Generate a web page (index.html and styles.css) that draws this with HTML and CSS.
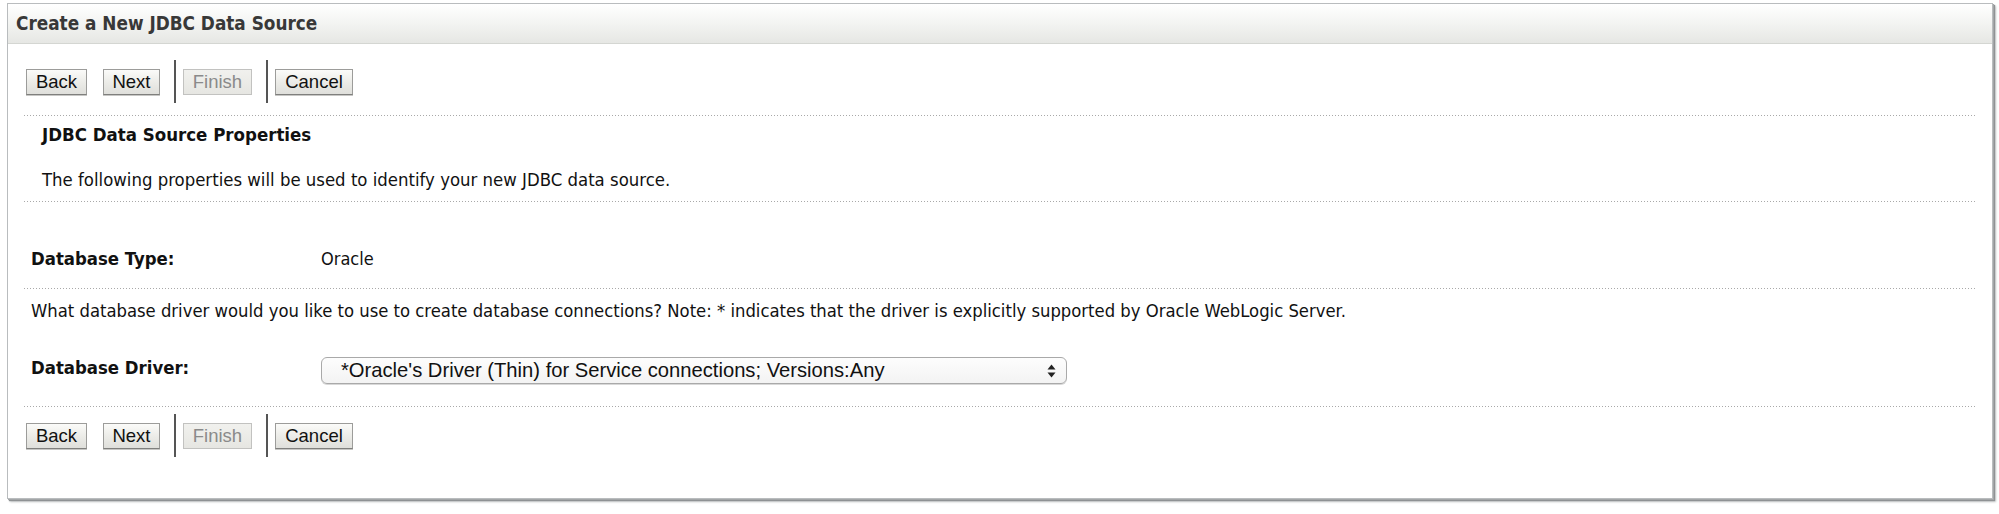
FILE: index.html
```html
<!DOCTYPE html>
<html>
<head>
<meta charset="utf-8">
<title>Create a New JDBC Data Source</title>
<link rel="stylesheet" href="styles.css">
</head>
<body>
<div class="frame">
  <div class="titlebar">Create a New JDBC Data Source</div>
  <div class="content">
    <div class="btnbar">
      <button class="btn btn-back">Back</button>
      <button class="btn btn-next">Next</button>
      <span class="sep"></span>
      <button class="btn btn-finish" disabled>Finish</button>
      <span class="sep"></span>
      <button class="btn btn-cancel">Cancel</button>
    </div>
    <div class="section intro-section">
      <div class="heading">JDBC Data Source Properties</div>
      <div class="intro">The following properties will be used to identify your new JDBC data source.</div>
    </div>
    <div class="section type-section">
      <div class="row">
        <span class="label">Database Type:</span>
        <span class="value">Oracle</span>
      </div>
    </div>
    <div class="section driver-section">
      <div class="note">What database driver would you like to use to create database connections? Note: * indicates that the driver is explicitly supported by Oracle WebLogic Server.</div>
      <div class="row driver-row">
        <span class="label">Database Driver:</span>
        <div class="select">
          <span class="select-text">*Oracle's Driver (Thin) for Service connections; Versions:Any</span>
          <svg class="arrows" width="9" height="14" viewBox="0 0 9 14"><path d="M4.5 0.5 L8.5 5.5 L0.5 5.5 Z" fill="#222"/><path d="M4.5 13.5 L8.5 8.5 L0.5 8.5 Z" fill="#222"/></svg>
        </div>
      </div>
    </div>
    <div class="section bottom-section">
      <div class="btnbar">
        <button class="btn btn-back">Back</button>
        <button class="btn btn-next">Next</button>
        <span class="sep"></span>
        <button class="btn btn-finish" disabled>Finish</button>
        <span class="sep"></span>
        <button class="btn btn-cancel">Cancel</button>
      </div>
    </div>
  </div>
</div>
</body>
</html>
```

FILE: styles.css
```css
html, body {
  margin: 0;
  padding: 0;
  background: #ffffff;
}
body {
  width: 1999px;
  height: 514px;
  overflow: hidden;
  font-family: "DejaVu Sans Condensed", "DejaVu Sans", sans-serif;
  font-stretch: condensed;
  color: #111;
}
.frame {
  margin: 3px 0 0 7px;
  width: 1984px;
  height: 494px;
  box-sizing: content-box;
  border: 1px solid #b9bcbe;
  box-shadow: 1px 1px 0 #a3a6a8, 2px 2px 1px #8f9294, 3px 3px 2px #c4c6c7;
  background: #fff;
}
.titlebar {
  height: 39px;
  line-height: 39px;
  padding-left: 8px;
  background: linear-gradient(#ffffff, #f4f5f3 45%, #e6e7e4);
  border-bottom: 1px solid #d4d6d2;
  font-weight: bold;
  font-size: 18.8px;
  color: #383838;
}
.content {
  padding: 0 16px 0 16px;
}
.btnbar {
  display: flex;
  align-items: center;
  height: 43px;
  padding-top: 16px;
  padding-left: 2px;
}
.btn {
  font-family: "Liberation Sans", Arial, sans-serif;
  font-size: 18.5px;
  height: 26px;
  padding: 0;
  margin: 0;
  border: 1px solid #9c9c9a;
  border-bottom-color: #7f7f7d;
  border-radius: 0;
  background: linear-gradient(#fbfbf9, #ecece8 50%, #dfdfdb);
  color: #111;
  line-height: 24px;
  box-shadow: 0 1px 0 #c7c7c5;
}
.btn-back { width: 61px; }
.btn-next { width: 57px; margin-left: 16px; }
.btn-finish {
  width: 69px;
  color: #8a8a8a;
  border-color: #c2c2c0;
  background: linear-gradient(#f1f1ee, #e6e6e2);
  box-shadow: none;
}
.btn-cancel { width: 78px; }
.sep {
  width: 2px;
  height: 43px;
  background: #555;
  margin: 0 7px 0 14px;
}
.section {
  background-image: repeating-linear-gradient(to right, #a9a9a9 0, #a9a9a9 1px, transparent 1px, transparent 3px);
  background-size: 100% 1px;
  background-repeat: no-repeat;
  background-position: left top;
  border-top: 1px solid transparent;
}
.btnbar + .intro-section {
  margin-top: 11px;
}
.intro-section {
  padding: 10px 0 10px 18px;
}
.heading {
  font-weight: bold;
  font-size: 18.5px;
  line-height: 20px;
  margin-bottom: 25px;
}
.intro {
  font-size: 18.4px;
  line-height: 20px;
}
.type-section {
  padding: 48px 0 18px 7px;
}
.row {
  display: grid;
  grid-template-columns: 290px auto;
  align-items: start;
}
.label {
  font-weight: bold;
  font-size: 18.4px;
  line-height: 20px;
}
.value {
  font-size: 18px;
  line-height: 20px;
}
.driver-section {
  padding: 13px 0 21px 7px;
}
.note {
  font-size: 18.3px;
  line-height: 20px;
  margin-bottom: 36px;
}
.driver-row .label {
  margin-top: 1px;
}
.select {
  width: 746px;
  height: 27px;
  box-sizing: border-box;
  border: 1px solid #a9a9a9;
  border-radius: 6px;
  background: linear-gradient(#fdfdfd, #f3f3f3);
  display: flex;
  align-items: center;
  justify-content: space-between;
  padding: 0 10px 0 19px;
  box-shadow: 0 1px 0 #d8d8d8;
}
.select-text {
  font-family: "Liberation Sans", Arial, sans-serif;
  font-size: 20.2px;
  color: #111;
}
.arrows {
  display: block;
}
.bottom-section .btnbar {
  padding-top: 8px;
}
```
